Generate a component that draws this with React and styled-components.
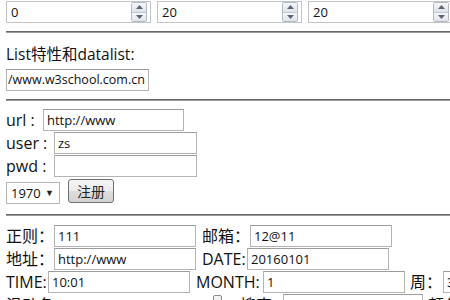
import React from 'react';
import styled, { createGlobalStyle } from 'styled-components';

const GlobalStyle = createGlobalStyle`
  html, body {
    margin: 0;
    padding: 0;
    background: #fff;
    overflow: hidden;
  }
  body {
    padding-left: 6px;
    font-family: "Open Sans", "Noto Sans CJK SC", sans-serif;
    color: #111;
  }
`;

const Page = styled.div`
  width: 444px;
  padding-top: 1px;
`;

const Row = styled.div`
  display: flex;
  align-items: center;
  height: ${props => props.h || 23}px;
  white-space: nowrap;
  gap: ${props => props.gap || 0}px;
`;

const Rule = styled.div`
  margin: ${props => props.m || '8px'} 0;
  height: 0;
  border-top: 1px solid #6a6a6a;
  border-bottom: 1px solid #9a9a9a;
`;

const Heading = styled.div`
  font-family: "Open Sans", "Noto Sans CJK SC", sans-serif;
  font-size: 15.5px;
  line-height: 26px;
  margin-top: 5px;
  white-space: nowrap;
`;

const Label = styled.span`
  font-family: "Open Sans", "Noto Sans CJK SC", sans-serif;
  font-size: 16px;
  line-height: 23px;
  flex: none;
  margin-left: ${props => props.ml || 0}px;
  width: ${props => (props.w ? props.w + 'px' : 'auto')};
  letter-spacing: ${props => props.ls || 0}px;
`;

const TextBox = styled.input`
  flex: none;
  box-sizing: border-box;
  width: ${props => props.w || 142}px;
  height: 22px;
  margin: 0;
  margin-top: ${props => props.mt || 0}px;
  padding: 0 ${props => (props.tight ? 1 : 3)}px;
  border: 1px solid #b4b4b4;
  border-top-color: #9c9c9c;
  font-family: "Open Sans", "Noto Sans CJK SC", sans-serif;
  font-size: ${props => (props.tight ? 12.5 : 13)}px;
  color: #111;
  background: #fff;
  outline: none;
`;

const NumberWrap = styled.div`
  flex: none;
  display: flex;
  align-items: center;
  box-sizing: border-box;
  width: 145px;
  height: 22px;
  border: 1px solid #c4c4c4;
  background: #fff;
`;

const NumberField = styled.input`
  flex: 1;
  min-width: 0;
  border: none;
  outline: none;
  padding: 0 4px;
  font-family: "Open Sans", sans-serif;
  font-size: 13px;
  color: #111;
  background: transparent;
`;

const Spinner = styled.div`
  flex: none;
  display: flex;
  flex-direction: column;
  width: 14px;
  height: 18px;
  margin-right: 3px;
  border: 1px solid #b3bac7;
  border-radius: 2px;
  overflow: hidden;
`;

const SpinHalf = styled.div`
  flex: 1;
  display: flex;
  align-items: center;
  justify-content: center;
  background: linear-gradient(#f6f7f9, #dfe3ea);
  border-top: ${props => (props.down ? '1px solid #c0c6d1' : 'none')};
`;

const Select = styled.div`
  flex: none;
  display: flex;
  align-items: center;
  box-sizing: border-box;
  width: 54px;
  height: 22px;
  margin-top: 3px;
  padding: 0 5px 0 4px;
  border: 1px solid #b4b4b4;
  font-family: "Open Sans", sans-serif;
  font-size: 13px;
  color: #111;
`;

const Caret = styled.span`
  margin-left: auto;
  font-size: 9px;
  color: #222;
`;

const Button = styled.button`
  flex: none;
  width: 46px;
  height: 24px;
  margin: 0 0 0 8px;
  padding: 0;
  border: 1px solid #707070;
  border-radius: 3px;
  background: linear-gradient(#f4f4f4 0%, #ececec 50%, #dedede 51%, #d2d2d2 100%);
  font-family: "Noto Sans CJK SC", sans-serif;
  font-size: 14px;
  color: #222;
`;

const Slider = styled.div`
  flex: none;
  position: relative;
  width: 162px;
  height: 23px;
  margin-left: 9px;
`;

const Track = styled.div`
  position: absolute;
  left: 0;
  right: 0;
  top: 9px;
  height: 3px;
  border: 1px solid #b0b0b0;
  background: #e6e6e6;
  box-sizing: border-box;
`;

const Thumb = styled.div`
  position: absolute;
  top: 1px;
  left: 150px;
  width: 9px;
  height: 20px;
  border: 1px solid #8a8a8a;
  border-radius: 2px;
  background: linear-gradient(#f6f6f6, #dcdcdc);
  box-sizing: border-box;
`;

const Arrow = ({ down }) => (
  <svg width="7" height="4" viewBox="0 0 7 4">
    <path d={down ? 'M0 0H7L3.5 4Z' : 'M0 4H7L3.5 0Z'} fill="#5b6475" />
  </svg>
);

const NumberBox = ({ value }) => (
  <NumberWrap>
    <NumberField defaultValue={value} />
    <Spinner>
      <SpinHalf>
        <Arrow />
      </SpinHalf>
      <SpinHalf down>
        <Arrow down />
      </SpinHalf>
    </Spinner>
  </NumberWrap>
);

export default function App() {
  return (
    <>
      <GlobalStyle />
      <Page>
        <Row h={22} gap={6}>
          <NumberBox value="0" />
          <NumberBox value="20" />
          <NumberBox value="20" />
        </Row>
        <Rule />

        <Heading>List特性和datalist:</Heading>
        <TextBox w={143} mt={1} tight defaultValue="/www.w3school.com.cn" />
        <Rule />

        <Row>
          <Label w={37}>url :</Label>
          <TextBox w={141} defaultValue="http://www" />
        </Row>
        <Row>
          <Label w={48}>user :</Label>
          <TextBox w={143} defaultValue="zs" />
        </Row>
        <Row>
          <Label w={48}>pwd :</Label>
          <TextBox w={143} defaultValue="" />
        </Row>
        <Row h={27}>
          <Select>
            1970
            <Caret>▼</Caret>
          </Select>
          <Button>注册</Button>
        </Row>
        <Rule m="9px" />

        <Row>
          <Label w={48}>正则：</Label>
          <TextBox defaultValue="111" />
          <Label ml={6} w={48}>邮箱：</Label>
          <TextBox defaultValue="12@11" />
        </Row>
        <Row>
          <Label w={48}>地址：</Label>
          <TextBox defaultValue="http://www" />
          <Label ml={6} w={45}>DATE:</Label>
          <TextBox defaultValue="20160101" />
        </Row>
        <Row>
          <Label w={42}>TIME:</Label>
          <TextBox defaultValue="10:01" />
          <Label ml={6} w={67}>MONTH:</Label>
          <TextBox defaultValue="1" />
          <Label ml={5} w={33}>周：</Label>
          <TextBox defaultValue="3" />
        </Row>
        <Row>
          <Label w={48}>滑动条</Label>
          <Slider>
            <Track />
            <Thumb />
          </Slider>
          <Label ml={15} w={43}>搜索</Label>
          <TextBox w={140} defaultValue="" />
          <Label ml={5}>颜色：</Label>
        </Row>
      </Page>
    </>
  );
}
